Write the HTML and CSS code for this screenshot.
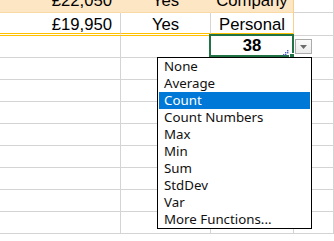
FILE: index.html
```html
<!DOCTYPE html>
<html lang="en">
<head>
  <meta charset="UTF-8">
  <title>Total row functions</title>
  <link rel="stylesheet" href="styles.css">
</head>
<body>
  <div class="sheet">
    <div class="row first">
      <div class="cell money band">£22,050</div>
      <div class="cell mid band">Yes</div>
      <div class="cell mid band edge">Company</div>
      <div class="cell"></div>
    </div>
    <div class="row last">
      <div class="cell money">£19,950</div>
      <div class="cell mid">Yes</div>
      <div class="cell mid edge">Personal</div>
      <div class="cell"></div>
    </div>
    <div class="row total">
      <div class="cell"></div>
      <div class="cell"></div>
      <div class="cell mid bold active">
        38
        <div class="selection"></div>
        <svg class="grip" width="6" height="6" viewBox="0 0 6 6">
          <rect x="4" y="0" width="1.4" height="1.4" fill="#4f62c9"/>
          <rect x="2" y="2" width="1.4" height="1.4" fill="#4f62c9"/>
          <rect x="4" y="2" width="1.4" height="1.4" fill="#4f62c9"/>
          <rect x="0" y="4" width="1.4" height="1.4" fill="#4f62c9"/>
          <rect x="2" y="4" width="1.4" height="1.4" fill="#4f62c9"/>
        </svg>
        <div class="handle"></div>
        <div class="drop">
          <svg width="7" height="4" viewBox="0 0 7 4"><path d="M0 0h7L3.5 4z" fill="#6b6b6b"/></svg>
        </div>
      </div>
      <div class="cell"></div>
    </div>
    <div class="row"><div class="cell"></div><div class="cell"></div><div class="cell"></div><div class="cell"></div></div>
    <div class="row"><div class="cell"></div><div class="cell"></div><div class="cell"></div><div class="cell"></div></div>
    <div class="row"><div class="cell"></div><div class="cell"></div><div class="cell"></div><div class="cell"></div></div>
    <div class="row"><div class="cell"></div><div class="cell"></div><div class="cell"></div><div class="cell"></div></div>
    <div class="row"><div class="cell"></div><div class="cell"></div><div class="cell"></div><div class="cell"></div></div>
    <div class="row"><div class="cell"></div><div class="cell"></div><div class="cell"></div><div class="cell"></div></div>
    <div class="row"><div class="cell"></div><div class="cell"></div><div class="cell"></div><div class="cell"></div></div>
    <div class="row"><div class="cell"></div><div class="cell"></div><div class="cell"></div><div class="cell"></div></div>
  </div>

  <ul class="menu">
    <li>None</li>
    <li>Average</li>
    <li class="selected">Count</li>
    <li>Count Numbers</li>
    <li>Max</li>
    <li>Min</li>
    <li>Sum</li>
    <li>StdDev</li>
    <li>Var</li>
    <li>More Functions...</li>
  </ul>
</body>
</html>
```

FILE: styles.css
```css
body {
  margin: 0;
  width: 334px;
  height: 241px;
  overflow: hidden;
  background: #fff;
  font-family: "Liberation Sans", Arial, sans-serif;
  font-size: 16.7px;
  color: #000;
  position: relative;
}
.sheet {
  margin-top: -10px;
}
.row {
  display: grid;
  grid-template-columns: 121px 90px 83px 1fr;
  height: 22px;
}
.row.first {
  height: 23px;
}
.row.last {
  height: 23px;
}
.cell {
  box-sizing: border-box;
  border-right: 1px solid #d4d4d4;
  border-bottom: 1px solid #d4d4d4;
  display: flex;
  align-items: flex-end;
  line-height: 17px;
  white-space: nowrap;
  padding-bottom: 1px;
}
.first .cell {
  padding-bottom: 3px;
}
.band {
  background: #fde6c4;
  border-right-color: #fde6c4;
  border-bottom-color: #f9d9a6;
}
.edge {
  border-right-color: #f9d08a;
}
.last .cell:not(:last-child) {
  border-bottom: 3px double #ffc000;
}
.last .cell {
  padding-bottom: 0;
}
.total .cell {
  padding-bottom: 3px;
}
.money {
  justify-content: flex-end;
  padding-right: 8px;
}
.mid {
  justify-content: center;
}
.bold {
  font-weight: bold;
}
.active {
  position: relative;
}
.selection {
  position: absolute;
  left: -2px;
  top: -2px;
  right: -1px;
  bottom: 0;
  border: 2px solid #217346;
}
.grip {
  position: absolute;
  right: 4px;
  bottom: 1px;
}
.handle {
  position: absolute;
  right: -2px;
  bottom: -2px;
  width: 4px;
  height: 4px;
  background: #217346;
  border: 1px solid #fff;
}
.drop {
  position: absolute;
  left: 84px;
  top: 3px;
  width: 17px;
  height: 15px;
  box-sizing: border-box;
  border: 1px solid #ababab;
  background: linear-gradient(#fafafa, #ececec);
  display: flex;
  align-items: center;
  justify-content: center;
}
.menu {
  position: absolute;
  left: 157px;
  top: 57px;
  width: 155px;
  box-sizing: border-box;
  margin: 0;
  padding: 0 1px;
  list-style: none;
  background: #fff;
  border: 1px solid #000;
  font-family: "Noto Sans", sans-serif;
  font-size: 13.3px;
  color: #111;
}
.menu li {
  height: 17px;
  line-height: 17px;
  padding-left: 5px;
}
.menu li.selected {
  background: #0078d7;
  color: #fff;
}
```
